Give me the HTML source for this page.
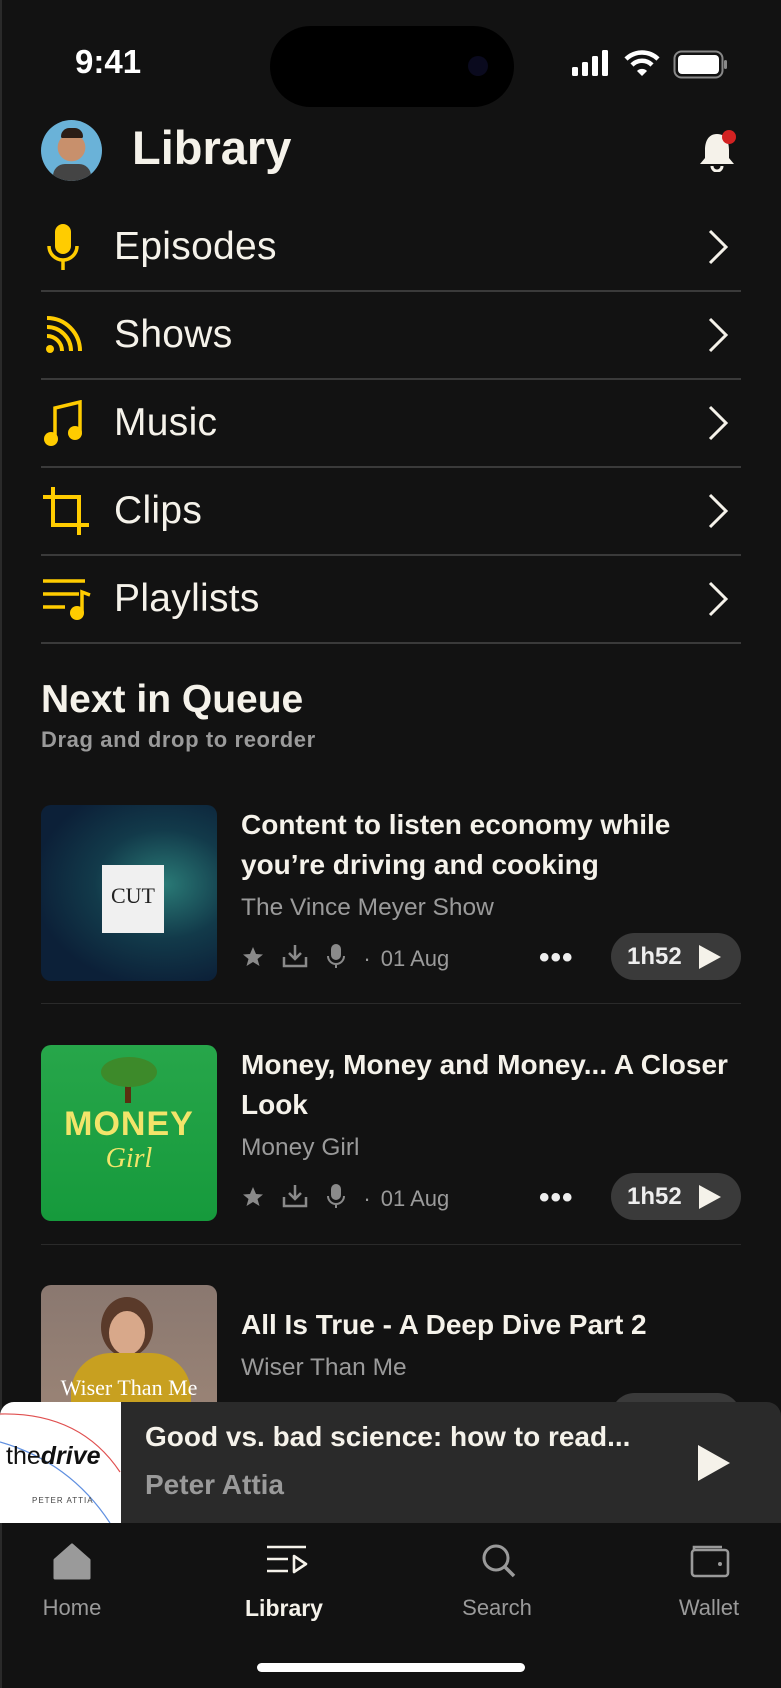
<!DOCTYPE html>
<html><head><meta charset="utf-8"><style>
*{margin:0;padding:0;box-sizing:border-box}
body{width:781px;height:1688px;background:#121212;font-family:"Liberation Sans",sans-serif;color:#f5f2ea;position:relative;overflow:hidden}
.a{position:absolute}
.row{position:absolute;left:41px;width:700px;height:88px;border-bottom:2px solid #3a3a3a}
.row .t{position:absolute;left:73px;top:50%;transform:translateY(-50%);font-size:39px;color:#f5f2ea;letter-spacing:0.3px}
.row svg.i{position:absolute;left:2px;top:50%;transform:translateY(-50%)}
.row svg.c{position:absolute;right:12px;top:50%;transform:translateY(-50%)}
.title{font-size:28px;font-weight:bold;line-height:40px;color:#f5f2ea}
.sub{font-size:24.5px;color:#9a9a9a}
.meta{font-size:22px;color:#9a9a9a}
.pill{position:absolute;left:611px;width:130px;height:47px;border-radius:24px;background:#3a3a3a;font-size:24px;font-weight:bold;color:#eee}
.sep{position:absolute;left:41px;width:700px;height:1px;background:#2a2a2a}
.tab{position:absolute;width:120px;text-align:center;font-size:22px;color:#9a9a9a}
</style></head><body>
<div class="a" style="left:0;top:0;width:2px;height:1688px;background:#2a2a2a"></div>
<div class="a" style="left:75px;top:43px;font-size:33px;font-weight:bold;color:#fff">9:41</div>
<div class="a" style="left:270px;top:26px;width:244px;height:81px;border-radius:41px;background:#000"></div>
<div class="a" style="left:468px;top:56px;width:20px;height:20px;border-radius:50%;background:#0a0a1e"></div>
<svg class="a" style="left:572px;top:50px" width="40" height="26"><rect x="0" y="17" width="6" height="9" rx="1.5" fill="#fff"/><rect x="10" y="12" width="6" height="14" rx="1.5" fill="#fff"/><rect x="20" y="6" width="6" height="20" rx="1.5" fill="#fff"/><rect x="30" y="0" width="6" height="26" rx="1.5" fill="#fff"/></svg>
<svg class="a" style="left:624px;top:49px" width="36" height="28" viewBox="0 0 36 28"><path d="M2 10 A23 23 0 0 1 34 10" stroke="#fff" stroke-width="4.5" fill="none"/><path d="M8 16 A14 14 0 0 1 28 16" stroke="#fff" stroke-width="4.5" fill="none"/><path d="M13 22 L18 27 L23 22 A7 7 0 0 0 13 22Z" fill="#fff"/></svg>
<svg class="a" style="left:673px;top:50px" width="56" height="30"><rect x="1.5" y="1.5" width="48" height="26" rx="7" stroke="#888" stroke-width="2" fill="none"/><rect x="5" y="5" width="41" height="19" rx="4" fill="#fff"/><rect x="51" y="10" width="3" height="9" rx="1.5" fill="#888"/></svg>

<div class="a" style="left:41px;top:120px;width:61px;height:61px;border-radius:50%;background:radial-gradient(circle at 50% 45%,#c8906c 0 30%,#6ab2d8 31%);overflow:hidden"><div style="position:absolute;left:12px;top:44px;width:38px;height:20px;border-radius:12px 12px 0 0;background:#444"></div><div style="position:absolute;left:20px;top:8px;width:22px;height:10px;border-radius:10px 10px 2px 2px;background:#2a1d16"></div></div>
<div class="a" style="left:132px;top:120px;font-size:47px;font-weight:bold;color:#f5f2ea">Library</div>
<svg class="a" style="left:697px;top:130px" width="40" height="42" viewBox="0 0 40 42"><path d="M20 4 C11 4 8 12 8 20 L8 28 L3 34 L37 34 L32 28 L32 20 C32 12 29 4 20 4Z" fill="#f5f2ea"/><path d="M15 36 A5 5 0 0 0 25 36" stroke="#f5f2ea" stroke-width="3" fill="none"/><circle cx="32" cy="7" r="7" fill="#d32222"/></svg>

<div class="row" style="top:204px"><svg class="i" width="40" height="46" viewBox="0 0 40 46"><rect x="12" y="0" width="16" height="30" rx="8" fill="#ffcc00"/><path d="M6 22 A14 14 0 0 0 34 22" stroke="#ffcc00" stroke-width="3.5" fill="none"/><line x1="20" y1="36" x2="20" y2="46" stroke="#ffcc00" stroke-width="3.5"/></svg><div class="t">Episodes</div><svg class="c" width="22" height="38"><path d="M3 3 L19 19 L3 35" stroke="#f5f2ea" stroke-width="3" fill="none"/></svg></div>
<div class="row" style="top:292px"><svg class="i" width="40" height="40" viewBox="0 0 40 40"><circle cx="7" cy="34" r="4" fill="#ffcc00"/><path d="M4 21 A15 15 0 0 1 19 36" stroke="#ffcc00" stroke-width="4" fill="none"/><path d="M4 12 A24 24 0 0 1 28 36" stroke="#ffcc00" stroke-width="4" fill="none"/><path d="M4 3 A33 33 0 0 1 37 36" stroke="#ffcc00" stroke-width="4" fill="none"/></svg><div class="t">Shows</div><svg class="c" width="22" height="38"><path d="M3 3 L19 19 L3 35" stroke="#f5f2ea" stroke-width="3" fill="none"/></svg></div>
<div class="row" style="top:380px"><svg class="i" width="40" height="46" viewBox="0 0 40 46"><path d="M12 38 L12 8 L37 2 L37 32" stroke="#ffcc00" stroke-width="3.5" fill="none"/><circle cx="8" cy="39" r="7" fill="#ffcc00"/><circle cx="32" cy="33" r="7" fill="#ffcc00"/></svg><div class="t">Music</div><svg class="c" width="22" height="38"><path d="M3 3 L19 19 L3 35" stroke="#f5f2ea" stroke-width="3" fill="none"/></svg></div>
<div class="row" style="top:468px"><svg class="i" width="46" height="48" viewBox="0 0 46 48"><path d="M10 0 L10 38 L46 38" stroke="#ffcc00" stroke-width="4" fill="none"/><path d="M0 10 L36 10 L36 48" stroke="#ffcc00" stroke-width="4" fill="none"/></svg><div class="t">Clips</div><svg class="c" width="22" height="38"><path d="M3 3 L19 19 L3 35" stroke="#f5f2ea" stroke-width="3" fill="none"/></svg></div>
<div class="row" style="top:556px"><svg class="i" width="48" height="42" viewBox="0 0 48 42"><path d="M0 3 H42 M0 16 H36 M0 29 H22" stroke="#ffcc00" stroke-width="3.5"/><circle cx="34" cy="35" r="7" fill="#ffcc00"/><path d="M39 35 L39 14 L47 17" stroke="#ffcc00" stroke-width="3.5" fill="none"/></svg><div class="t">Playlists</div><svg class="c" width="22" height="38"><path d="M3 3 L19 19 L3 35" stroke="#f5f2ea" stroke-width="3" fill="none"/></svg></div>

<div class="a" style="left:41px;top:678px;font-size:39px;font-weight:bold;color:#f5f2ea">Next in Queue</div>
<div class="a" style="left:41px;top:727px;font-size:22px;font-weight:bold;color:#9a9a9a;letter-spacing:0.6px">Drag and drop to reorder</div>

<!-- item 1 -->
<div class="a" style="left:41px;top:805px;width:176px;height:176px;border-radius:10px;background:radial-gradient(ellipse at 70% 45%,#2a7a76 0,#123a4a 40%,#0c2038 75%);overflow:hidden">
<div style="position:absolute;left:61px;top:60px;width:62px;height:68px;background:#f0f0f0;color:#222;font-family:'Liberation Serif',serif;font-size:22px;text-align:center;padding-top:18px">CUT</div></div>
<div class="a title" style="left:241px;top:805px">Content to listen economy while<br>you’re driving and cooking</div>
<div class="a sub" style="left:241px;top:894px">The Vince Meyer Show</div>
<div class="a meta" style="left:241px;top:943px">
<svg width="24" height="24" style="vertical-align:-3px" viewBox="0 0 24 24"><path d="M12 2 L15 9 L22 9.5 L16.5 14 L18.5 21 L12 17 L5.5 21 L7.5 14 L2 9.5 L9 9Z" fill="#8a8a8a"/></svg>
<svg width="28" height="26" style="vertical-align:-3px;margin-left:10px" viewBox="0 0 28 26"><path d="M14 2 V16 M8 10 L14 16 L20 10 M3 14 V23 H25 V14" stroke="#8a8a8a" stroke-width="2.5" fill="none"/></svg>
<svg width="22" height="26" style="vertical-align:-3px;margin-left:10px" viewBox="0 0 22 26"><rect x="6" y="1" width="10" height="16" rx="5" fill="#8a8a8a"/><path d="M3 13 A8 8 0 0 0 19 13 M11 21 V25" stroke="#8a8a8a" stroke-width="2" fill="none"/></svg>
<span style="margin-left:10px">·</span><span style="margin-left:10px">01 Aug</span></div>
<div class="a" style="left:539px;top:948px;font-size:30px;color:#eee;letter-spacing:1px;font-weight:bold;line-height:20px">•••</div>
<div class="pill" style="top:933px"><span style="position:absolute;left:16px;top:10px">1h52</span><svg style="position:absolute;left:86px;top:11px" width="26" height="26"><path d="M2 1 L24 13 L2 25Z" fill="#f5f2ea"/></svg></div>
<div class="sep" style="top:1003px"></div>

<!-- item 2 -->
<div class="a" style="left:41px;top:1045px;width:176px;height:176px;border-radius:10px;background:linear-gradient(#27a64a,#169a3c);overflow:hidden;text-align:center">
<div style="position:absolute;left:84px;top:28px;width:6px;height:30px;background:#5a3010"></div>
<div style="position:absolute;left:60px;top:12px;width:56px;height:30px;border-radius:50%;background:#3d8a2a"></div>
<div style="position:absolute;left:0;top:60px;width:176px;font-size:34px;font-weight:bold;color:#f2e46a;letter-spacing:1px">MONEY</div>
<div style="position:absolute;left:0;top:98px;width:176px;font-family:'Liberation Serif',serif;font-style:italic;font-size:28px;color:#f2e46a">Girl</div></div>
<div class="a title" style="left:241px;top:1045px">Money, Money and Money... A Closer<br>Look</div>
<div class="a sub" style="left:241px;top:1134px">Money Girl</div>
<div class="a meta" style="left:241px;top:1183px">
<svg width="24" height="24" style="vertical-align:-3px" viewBox="0 0 24 24"><path d="M12 2 L15 9 L22 9.5 L16.5 14 L18.5 21 L12 17 L5.5 21 L7.5 14 L2 9.5 L9 9Z" fill="#8a8a8a"/></svg>
<svg width="28" height="26" style="vertical-align:-3px;margin-left:10px" viewBox="0 0 28 26"><path d="M14 2 V16 M8 10 L14 16 L20 10 M3 14 V23 H25 V14" stroke="#8a8a8a" stroke-width="2.5" fill="none"/></svg>
<svg width="22" height="26" style="vertical-align:-3px;margin-left:10px" viewBox="0 0 22 26"><rect x="6" y="1" width="10" height="16" rx="5" fill="#8a8a8a"/><path d="M3 13 A8 8 0 0 0 19 13 M11 21 V25" stroke="#8a8a8a" stroke-width="2" fill="none"/></svg>
<span style="margin-left:10px">·</span><span style="margin-left:10px">01 Aug</span></div>
<div class="a" style="left:539px;top:1188px;font-size:30px;color:#eee;letter-spacing:1px;font-weight:bold;line-height:20px">•••</div>
<div class="pill" style="top:1173px"><span style="position:absolute;left:16px;top:10px">1h52</span><svg style="position:absolute;left:86px;top:11px" width="26" height="26"><path d="M2 1 L24 13 L2 25Z" fill="#f5f2ea"/></svg></div>
<div class="sep" style="top:1244px"></div>

<!-- item 3 -->
<div class="a" style="left:41px;top:1285px;width:176px;height:176px;border-radius:10px;background:linear-gradient(#8a7870,#a08878);overflow:hidden">
<div style="position:absolute;left:60px;top:12px;width:52px;height:60px;border-radius:50%;background:#5a3a2a"></div>
<div style="position:absolute;left:68px;top:26px;width:36px;height:44px;border-radius:50%;background:#d8a88a"></div>
<div style="position:absolute;left:30px;top:68px;width:120px;height:100px;border-radius:40px 40px 0 0;background:#c8a020"></div>
<div style="position:absolute;left:0;top:90px;width:176px;text-align:center;font-family:'Liberation Serif',serif;font-size:22px;color:#fff">Wiser Than Me</div></div>
<div class="a title" style="left:241px;top:1305px">All Is True - A Deep Dive Part 2</div>
<div class="a sub" style="left:241px;top:1354px">Wiser Than Me</div>
<div class="pill" style="top:1393px"></div>

<!-- mini player -->
<div class="a" style="left:0;top:1402px;width:781px;height:121px;background:#2a2a2a;border-radius:14px 14px 0 0;overflow:hidden">
<div style="position:absolute;left:0;top:0;width:121px;height:121px;background:#fff;overflow:hidden">
<svg width="121" height="121" style="position:absolute;left:0;top:0"><path d="M0 12 Q80 10 120 70" stroke="#e05050" stroke-width="1.2" fill="none"/><path d="M0 40 Q70 60 110 121" stroke="#6090e0" stroke-width="1.2" fill="none"/></svg>
<div style="position:absolute;left:6px;top:40px;font-size:25px;color:#111">the<b><i>drive</i></b></div>
<div style="position:absolute;left:32px;top:94px;font-size:8px;color:#444;letter-spacing:1px">PETER ATTIA</div></div>
<div style="position:absolute;left:145px;top:19px;font-size:28px;font-weight:bold;color:#f5f2ea">Good vs. bad science: how to read...</div>
<div style="position:absolute;left:145px;top:67px;font-size:28px;font-weight:bold;color:#9a9a9a">Peter Attia</div>
<svg style="position:absolute;left:696px;top:42px" width="36" height="38"><path d="M2 1 L34 19 L2 37Z" fill="#f5f2ea"/></svg>
</div>

<!-- tabs -->
<svg class="a" style="left:53px;top:1542px" width="38" height="38" viewBox="0 0 38 38"><path d="M2 18 L19 3 L36 18 V36 H2Z" fill="#9a9a9a" stroke="#9a9a9a" stroke-width="3" stroke-linejoin="round"/></svg>
<div class="tab" style="left:12px;top:1595px">Home</div>
<svg class="a" style="left:266px;top:1545px" width="42" height="32" viewBox="0 0 42 32"><path d="M1 2 H40 M1 14 H22 M1 26 H22" stroke="#f5f2ea" stroke-width="2.6"/><path d="M28 11 L40 19 L28 27Z" stroke="#f5f2ea" stroke-width="2.6" fill="none" stroke-linejoin="round"/></svg>
<div class="tab" style="left:224px;top:1595px;color:#f5f2ea;font-weight:bold;font-size:23px">Library</div>
<svg class="a" style="left:480px;top:1542px" width="38" height="38" viewBox="0 0 38 38"><circle cx="16" cy="16" r="12" stroke="#9a9a9a" stroke-width="3" fill="none"/><path d="M25 25 L34 34" stroke="#9a9a9a" stroke-width="3.5"/></svg>
<div class="tab" style="left:437px;top:1595px">Search</div>
<svg class="a" style="left:690px;top:1544px" width="40" height="34" viewBox="0 0 40 34"><rect x="2" y="6" width="36" height="26" rx="3" stroke="#9a9a9a" stroke-width="2.6" fill="none"/><path d="M4 6 L4 3 H32" stroke="#9a9a9a" stroke-width="2.6" fill="none"/><circle cx="30" cy="20" r="2" fill="#9a9a9a"/></svg>
<div class="tab" style="left:649px;top:1595px">Wallet</div>
<div class="a" style="left:257px;top:1663px;width:268px;height:9px;border-radius:5px;background:#fff"></div>
</body></html>
